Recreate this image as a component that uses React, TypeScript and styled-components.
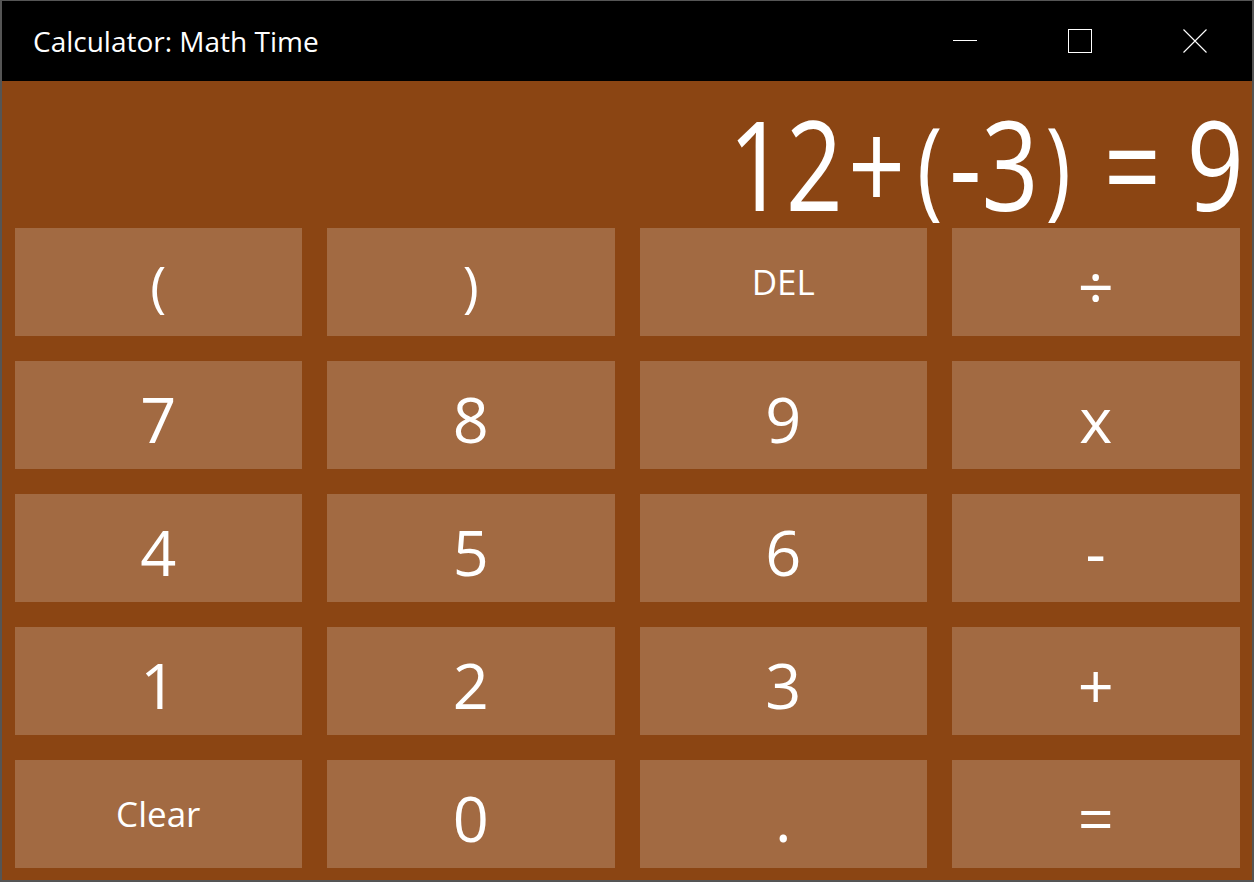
import React from "react";
import styled, { createGlobalStyle } from "styled-components";

const GlobalStyle = createGlobalStyle`
  html, body {
    margin: 0;
    padding: 0;
    background: #555555;
  }
  body {
    font-family: "Open Sans", "Noto Sans", sans-serif;
  }
`;

const Window = styled.div`
  width: 1254px;
  height: 882px;
  box-sizing: border-box;
  border: 2px solid #555555;
  border-top-width: 1px;
  background: #8b4513;
  display: flex;
  flex-direction: column;
  overflow: hidden;
`;

const TitleBar = styled.div`
  height: 80px;
  flex: none;
  background: #000;
  display: flex;
  align-items: center;
`;

const Title = styled.div`
  flex: 1;
  padding-left: 31px;
  color: #fff;
  font-size: 28px;
`;

const Controls = styled.div`
  display: flex;
  height: 100%;
`;

const ControlButton = styled.div`
  width: 115px;
  height: 100%;
  display: flex;
  align-items: center;
  justify-content: center;
`;

const Display = styled.div`
  height: 134px;
  flex: none;
  display: flex;
  justify-content: flex-end;
  align-items: flex-end;
  padding-right: 8px;
`;

// the result text is stretched vertically, like a Viewbox set to Fill
const Expression = styled.span`
  display: inline-block;
  color: #fff;
  font-size: 100px;
  line-height: 100px;
  margin-bottom: -8.7px;
  transform-origin: 100% 88.8px;
  transform: scaleY(1.25);
  white-space: pre;
`;

const Paren = styled.span<{ $spaced?: boolean }>`
  font-size: 0.86em;
  vertical-align: 0.05em;
  padding: ${({ $spaced }) => ($spaced ? "0 0.08em" : "0")};
`;

const Op = styled.span`
  padding: 0 0.05em;
`;

const Keypad = styled.div`
  flex: 1;
  display: grid;
  grid-template-columns: repeat(4, 1fr);
  grid-auto-rows: 108px;
  gap: 25px;
  padding: 12.5px;
`;

const Key = styled.button<{ $word?: boolean }>`
  border: none;
  margin: 0;
  background: #a26a42;
  color: #fff;
  font-family: inherit;
  font-size: ${({ $word }) => ($word ? "35px" : "63px")};
  padding: ${({ $word }) => ($word ? "0" : "8px 0 0")};
  line-height: 1;
  display: flex;
  align-items: center;
  justify-content: center;
`;

const keys: { label: React.ReactNode; word?: boolean }[] = [
  { label: <Paren>(</Paren> },
  { label: <Paren>)</Paren> },
  { label: "DEL", word: true },
  { label: "÷" },
  { label: "7" },
  { label: "8" },
  { label: "9" },
  { label: "x" },
  { label: "4" },
  { label: "5" },
  { label: "6" },
  { label: "-" },
  { label: "1" },
  { label: "2" },
  { label: "3" },
  { label: "+" },
  { label: "Clear", word: true },
  { label: "0" },
  { label: "." },
  { label: "=" },
];

const App = () => {
  return (
    <>
      <GlobalStyle />
      <Window>
        <TitleBar>
          <Title>Calculator: Math Time</Title>
          <Controls>
            <ControlButton>
              <svg width="24" height="24" viewBox="0 0 24 24">
                <line x1="0" y1="11.5" x2="24" y2="11.5" stroke="#fff" strokeWidth="1" />
              </svg>
            </ControlButton>
            <ControlButton>
              <svg width="24" height="24" viewBox="0 0 24 24">
                <rect x="0.5" y="0.5" width="23" height="23" fill="none" stroke="#fff" strokeWidth="1" />
              </svg>
            </ControlButton>
            <ControlButton>
              <svg width="24" height="24" viewBox="0 0 24 24">
                <path d="M0.5 0.5 L23.5 23.5 M23.5 0.5 L0.5 23.5" stroke="#fff" strokeWidth="1.1" />
              </svg>
            </ControlButton>
          </Controls>
        </TitleBar>

        <Display>
          <Expression>
            12<Op>+</Op>
            <Paren $spaced>(</Paren>-3<Paren $spaced>)</Paren> = 9
          </Expression>
        </Display>

        <Keypad>
          {keys.map((k, i) => (
            <Key key={i} $word={k.word}>
              {k.label}
            </Key>
          ))}
        </Keypad>
      </Window>
    </>
  );
};

export default App;
